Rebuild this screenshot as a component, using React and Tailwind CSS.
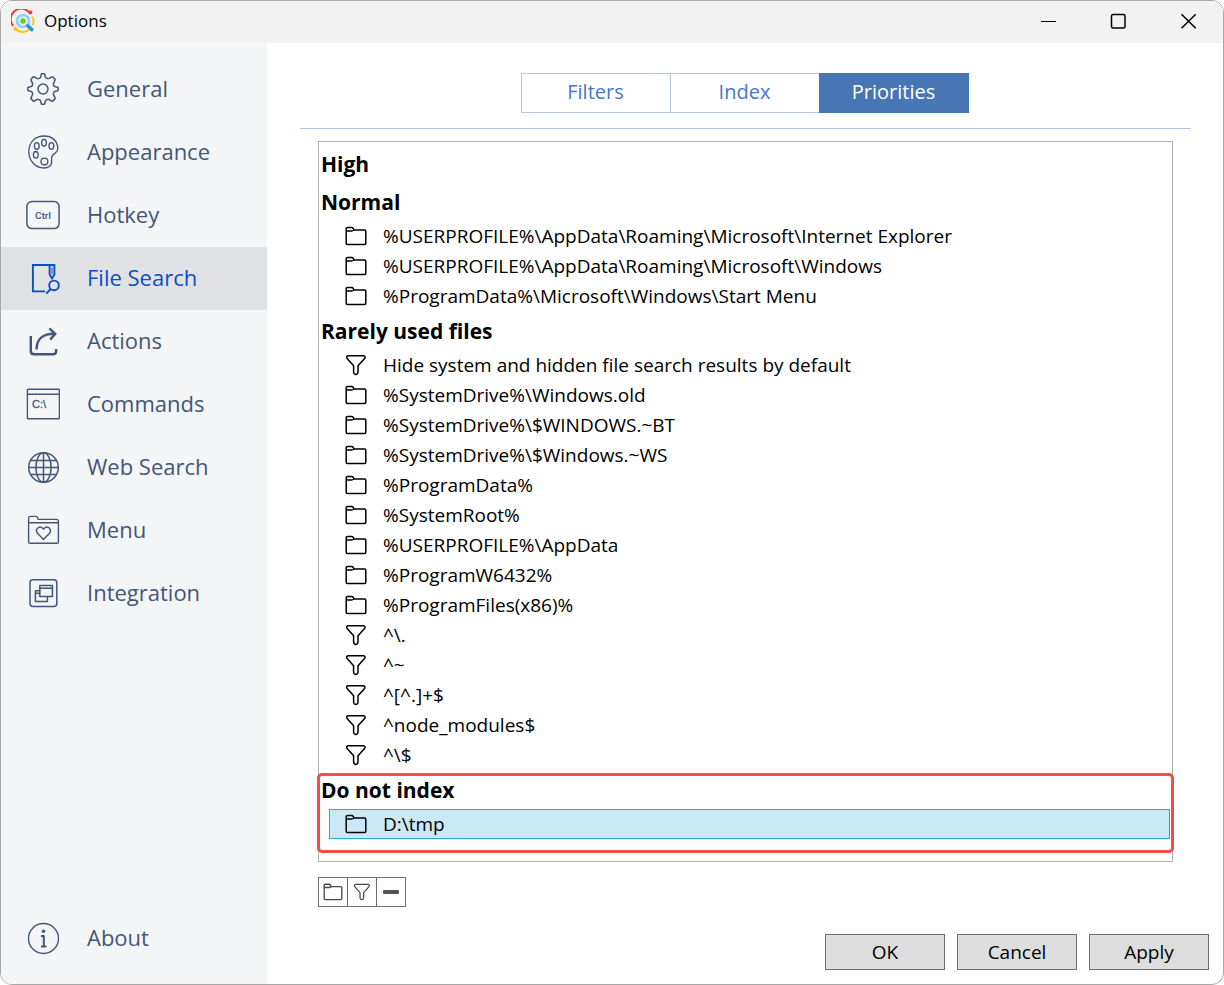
import { useState } from "react";

const NAV_ITEMS = [
  { id: "general", label: "General", Icon: GearIcon },
  { id: "appearance", label: "Appearance", Icon: PaletteIcon },
  { id: "hotkey", label: "Hotkey", Icon: KeyIcon },
  { id: "file-search", label: "File Search", Icon: FileSearchIcon },
  { id: "actions", label: "Actions", Icon: ShareIcon },
  { id: "commands", label: "Commands", Icon: TerminalIcon },
  { id: "web-search", label: "Web Search", Icon: GlobeIcon },
  { id: "menu", label: "Menu", Icon: HeartFolderIcon },
  { id: "integration", label: "Integration", Icon: WindowsIcon },
];

const TABS = ["Filters", "Index", "Priorities"];

const GROUPS = [
  { title: "High", rows: [] },
  {
    title: "Normal",
    rows: [
      { kind: "folder", text: "%USERPROFILE%\\AppData\\Roaming\\Microsoft\\Internet Explorer" },
      { kind: "folder", text: "%USERPROFILE%\\AppData\\Roaming\\Microsoft\\Windows" },
      { kind: "folder", text: "%ProgramData%\\Microsoft\\Windows\\Start Menu" },
    ],
  },
  {
    title: "Rarely used files",
    rows: [
      { kind: "filter", text: "Hide system and hidden file search results by default" },
      { kind: "folder", text: "%SystemDrive%\\Windows.old" },
      { kind: "folder", text: "%SystemDrive%\\$WINDOWS.~BT" },
      { kind: "folder", text: "%SystemDrive%\\$Windows.~WS" },
      { kind: "folder", text: "%ProgramData%" },
      { kind: "folder", text: "%SystemRoot%" },
      { kind: "folder", text: "%USERPROFILE%\\AppData" },
      { kind: "folder", text: "%ProgramW6432%" },
      { kind: "folder", text: "%ProgramFiles(x86)%" },
      { kind: "filter", text: "^\\." },
      { kind: "filter", text: "^~" },
      { kind: "filter", text: "^[^.]+$" },
      { kind: "filter", text: "^node_modules$" },
      { kind: "filter", text: "^\\$" },
    ],
  },
  { title: "Do not index", marked: true, rows: [{ kind: "folder", text: "D:\\tmp" }] },
];

// Sidebar icons share a 34px box and take the text colour.
function NavSvg({ children, width = 1.5 }) {
  return (
    <svg width="34" height="34" viewBox="0 0 34 34" fill="none" stroke="currentColor" strokeWidth={width} strokeLinecap="round" strokeLinejoin="round" aria-hidden="true" className="shrink-0">
      {children}
    </svg>
  );
}

function GearIcon() {
  return (
    <NavSvg>
      <path d="M14.6 5.1 L15.2 2.4 Q15.3 1.8 16 1.8 H18 Q18.7 1.8 18.8 2.4 L19.2 4.6 Q19.6 6.4 21.4 6.6 Q22.6 6.9 23.8 6 L25.8 4.9 Q26.4 4.6 26.9 5.1 L28.9 7.1 Q29.4 7.6 29.1 8.2 L28 10.2 Q27.1 11.4 27.4 12.6 Q27.6 14.4 29.4 14.8 L31.6 15.2 Q32.2 15.3 32.2 16 V18 Q32.2 18.7 31.6 18.8 L29.4 19.2 Q27.6 19.6 27.4 21.4 Q27.1 22.6 28 23.8 L29.1 25.8 Q29.4 26.4 28.9 26.9 L26.9 28.9 Q26.4 29.4 25.8 29.1 L23.8 28 Q22.6 27.1 21.4 27.4 Q19.6 27.6 19.2 29.4 L18.8 31.6 Q18.7 32.2 18 32.2 H16 Q15.3 32.2 15.2 31.6 L14.8 29.4 Q14.4 27.6 12.6 27.4 Q11.4 27.1 10.2 28 L8.2 29.1 Q7.6 29.4 7.1 28.9 L5.1 26.9 Q4.6 26.4 4.9 25.8 L6 23.8 Q6.9 22.6 6.6 21.4 Q6.4 19.6 4.6 19.2 L2.4 18.8 Q1.8 18.7 1.8 18 V16 Q1.8 15.3 2.4 15.2 L4.6 14.8 Q6.4 14.4 6.6 12.6 Q6.9 11.4 6 10.2 L4.9 8.2 Q4.6 7.6 5.1 7.1 L7.1 5.1 Q7.6 4.6 8.2 4.9 L10.2 6 Q11.4 6.9 12.6 6.6 Q14.2 6.4 14.6 5.1 Z" />
      <circle cx="17" cy="17" r="5" />
    </NavSvg>
  );
}

function PaletteIcon() {
  return (
    <NavSvg width={1.3}>
      <path d="M18 1 C9 1 2.8 7.6 2.8 16.5 C2.8 26 9.6 33 17.6 33 C23 33 26.4 30 25.6 25.4 C25 22 26 20.2 28.8 18.4 C31.6 16.5 32.4 13.6 31.4 10.2 C29.6 4.2 24.6 1 18 1 Z" />
      <ellipse cx="18" cy="7.7" rx="2.4" ry="3.3" />
      <ellipse cx="10.8" cy="11" rx="2.4" ry="3.3" />
      <ellipse cx="25.4" cy="11" rx="2.4" ry="3.3" />
      <ellipse cx="9.8" cy="19.8" rx="2.4" ry="3.3" />
      <circle cx="18.4" cy="26.6" r="3.4" />
    </NavSvg>
  );
}

function KeyIcon() {
  return (
    <NavSvg>
      <rect x="0.9" y="3.6" width="32.2" height="27" rx="5" />
      <text x="17" y="20.5" textAnchor="middle" fontSize="9" fontFamily="Inter, sans-serif" fontWeight="600" fill="currentColor" stroke="none">Ctrl</text>
    </NavSvg>
  );
}

function FileSearchIcon() {
  return (
    <NavSvg width={1.9}>
      <path strokeLinecap="butt" strokeLinejoin="miter" d="M19 30.4 H6.9 V4 H28.4 V13.5 L26 17.5 L23.6 13.5 V4" />
      <path d="M26 13 V7" strokeWidth="1" />
      <circle cx="28" cy="24.4" r="4.8" />
      <path strokeLinecap="butt" d="M24.7 28 L20.2 32.6" />
    </NavSvg>
  );
}

function ShareIcon() {
  return (
    <NavSvg width={2.4}>
      <path d="M4.8 12 V27 Q4.8 30.3 8 30.3 H27 Q30.1 30.3 30.1 27.2 V25" strokeLinecap="butt" />
      <path d="M10.6 25.6 C10.6 14.6 16.2 9.8 29 9.8" strokeLinecap="butt" />
      <path d="M23.4 4.3 L29.2 9.8 L24.2 15.6" strokeLinecap="butt" strokeLinejoin="miter" />
    </NavSvg>
  );
}

function TerminalIcon() {
  return (
    <NavSvg width={1.4}>
      <rect x="1.4" y="2.2" width="32" height="29.6" rx="1" />
      <path d="M1.6 7.2 H33.2" />
      <text x="6" y="21" fontSize="11" fontFamily="Liberation Sans, sans-serif" fill="currentColor" stroke="currentColor" strokeWidth="0.3">C:\</text>
    </NavSvg>
  );
}

function GlobeIcon() {
  return (
    <NavSvg width={1.5}>
      <circle cx="17.5" cy="17.5" r="14.8" />
      <ellipse cx="17.5" cy="17.5" rx="7.6" ry="14.8" />
      <path d="M17.5 2.7 V32.3 M2.7 17.5 H32.3 M4.9 10.5 H30.1 M4.9 24.5 H30.1" />
    </NavSvg>
  );
}

function HeartFolderIcon() {
  return (
    <NavSvg width={1.4}>
      <path d="M2.6 28.7 V5.4 Q2.6 3.4 4.6 3.4 H9.6 Q10.8 3.4 11.4 4.5 L12.2 6.4 H30.4 Q32.4 6.4 32.4 8.4 V28.7 Q32.4 30.3 30.8 30.3 H4.2 Q2.6 30.3 2.6 28.7 Z M2.6 9.8 H32.4" />
      <path d="M17.5 26.4 L11.7 20.6 Q9.4 17.8 11.3 15.4 Q14.4 12.4 17.5 16 Q20.6 12.4 23.7 15.4 Q25.6 17.8 23.3 20.6 Z" />
    </NavSvg>
  );
}

function WindowsIcon() {
  return (
    <NavSvg width={1.5}>
      <rect x="4" y="3.8" width="26.8" height="26.8" rx="3" />
      <path d="M13.8 14.8 H9.4 V25.4 H21.4 V20.5 M9.4 17.2 H13.8" />
      <path d="M13.8 9.4 H26.4 V20.4 H13.8 Z M13.8 12.2 H26.4" />
    </NavSvg>
  );
}

function InfoIcon() {
  return (
    <NavSvg width={1.4}>
      <circle cx="17.5" cy="17.5" r="15" />
      <circle cx="17.5" cy="10.2" r="1.8" fill="currentColor" stroke="none" />
      <path d="M15 15 H17.8 V25.2 M15 25.4 H20.4" strokeWidth="2" strokeLinecap="butt" />
    </NavSvg>
  );
}

function FolderIcon({ className = "h-5 w-[22px]" }) {
  return (
    <svg viewBox="0 0 22 20" fill="none" stroke="currentColor" strokeWidth="1.5" strokeLinejoin="round" aria-hidden="true" className={`shrink-0 ${className}`}>
      <path d="M1.2 17.2 V2.8 Q1.2 1.4 2.6 1.4 H6.6 Q7.6 1.4 8.2 2.4 L9 4 H19.6 Q20.8 4 20.8 5.2 V17.2 Q20.8 18.4 19.6 18.4 H2.4 Q1.2 18.4 1.2 17.2 Z" />
      <path d="M1.4 5 H6.8 Q7.6 5 9 4" />
    </svg>
  );
}

function FilterIcon({ className = "size-[22px]" }) {
  return (
    <svg viewBox="0 0 22 22" fill="none" stroke="currentColor" strokeWidth="1.5" strokeLinejoin="round" aria-hidden="true" className={`shrink-0 ${className}`}>
      <path d="M3 1.7 H18.6 Q20.6 2.2 19.8 4.2 L13 11.8 V18 Q12.8 20.4 10.8 20.4 Q8.8 20.4 8.6 18 V11.8 L1.9 4.2 Q1 2.2 3 1.7 Z" />
    </svg>
  );
}

function AppLogo() {
  return (
    <svg width="24" height="24" viewBox="0 0 24 24" fill="none" aria-hidden="true">
      <path d="M2.3 17 A10.4 10.4 0 0 1 18 3.2" stroke="#f5333b" strokeWidth="1.9" />
      <circle cx="19.4" cy="3.6" r="2" fill="#f5333b" />
      <path d="M21.4 7.6 A10.4 10.4 0 0 1 21.6 16.4 M18 20.8 A10.4 10.4 0 0 1 5 20.6" stroke="#fcc31e" strokeWidth="1.9" />
      <circle cx="4.4" cy="19.8" r="2" fill="#fcc31e" />
      <circle cx="12" cy="12" r="6" fill="#e2f4ff" stroke="#8fd0fa" strokeWidth="2.6" />
      <circle cx="12" cy="12" r="2.7" fill="#6fca1c" />
      <path d="M16.8 16.8 L20.8 20.6" stroke="#2b8fe0" strokeWidth="3.6" strokeLinecap="round" />
    </svg>
  );
}

function NavButton({ item, active, onClick }) {
  const { Icon, label } = item;
  return (
    <button
      type="button"
      onClick={onClick}
      className={`flex h-[63px] w-full items-center gap-[27px] pb-0.5 pl-[25px] text-left text-[22px] ${active ? "bg-[#e1e2e6] text-[#0a4fc4]" : "text-[#445577]"}`}
    >
      <Icon />
      {label}
    </button>
  );
}

function PriorityGroup({ group, selected, onSelect }) {
  return (
    <section className="relative">
      <h2 className="flex h-[38px] items-center pt-0.5 pl-0.5 text-[21px] font-bold">{group.title}</h2>
      {group.rows.length > 0 && (
        <ul className="pr-0.5 pb-px pl-[10px]">
          {group.rows.map((row) => (
            <li key={row.text}>
              <button
                type="button"
                onClick={() => onSelect(row.text)}
                className={`flex h-[30px] w-full items-center gap-4 border pl-[15px] text-left text-[19px] whitespace-nowrap ${selected === row.text ? "border-[#2fa3d9] bg-[#cbe8f6]" : "border-transparent"}`}
              >
                {row.kind === "folder" ? <FolderIcon /> : <FilterIcon />}
                {row.text}
              </button>
            </li>
          ))}
        </ul>
      )}
      {group.marked && <div className="pointer-events-none absolute -inset-x-[2px] top-0.5 -bottom-[13px] rounded-[5px] border-3 border-[#f54c45]" />}
    </section>
  );
}

export default function App() {
  const [page, setPage] = useState("file-search");
  const [tab, setTab] = useState("Priorities");
  const [selected, setSelected] = useState("D:\\tmp");

  return (
    <div className="flex min-h-screen flex-col overflow-hidden rounded-xl border border-[#a9a9a9] bg-white font-['Open_Sans','Noto_Sans',sans-serif] text-black">
      <header className="flex h-[42px] shrink-0 items-center bg-[#f2f2f2] pb-[3px] pl-[10px]">
        <AppLogo />
        <h1 className="ml-[9px] flex-1 text-[17px]">Options</h1>
        <button type="button" aria-label="Minimize" className="flex h-full w-[70px] items-center justify-center">
          <svg width="16" height="16" viewBox="0 0 16 16" stroke="#000" aria-hidden="true"><path d="M1 8.5 H16" /></svg>
        </button>
        <button type="button" aria-label="Maximize" className="flex h-full w-[70px] items-center justify-center">
          <svg width="16" height="16" viewBox="0 0 16 16" fill="none" stroke="#000" strokeWidth="1.5" aria-hidden="true"><rect x="1.5" y="1.5" width="13.5" height="13.5" rx="1.5" /></svg>
        </button>
        <button type="button" aria-label="Close" className="flex h-full w-[70px] items-center justify-center">
          <svg width="16" height="16" viewBox="0 0 16 16" stroke="#000" strokeWidth="1.5" aria-hidden="true"><path d="M1.5 1.3 L15.7 15.3 M15.7 1.3 L1.5 15.3" /></svg>
        </button>
      </header>

      <div className="flex flex-1">
        <nav className="flex w-[266px] shrink-0 flex-col bg-[#f4f5f7] pt-[15px] pb-[14px]">
          {NAV_ITEMS.map((item) => (
            <NavButton key={item.id} item={item} active={page === item.id} onClick={() => setPage(item.id)} />
          ))}
          <div className="mt-auto">
            <NavButton item={{ label: "About", Icon: InfoIcon }} active={page === "about"} onClick={() => setPage("about")} />
          </div>
        </nav>

        <main className="flex min-w-0 flex-1 flex-col pt-[30px] pb-[14px]">
          <div className="mr-8 ml-[33px] flex justify-center border-b border-[#aec4e6] pr-0.5 pb-[15px]">
            {TABS.map((name) => (
              <button
                key={name}
                type="button"
                onClick={() => setTab(name)}
                className={`-ml-px h-10 w-[150px] border pb-0.5 text-[20px] first:ml-0 ${tab === name ? "border-[#4876b5] bg-[#4876b5] text-white" : "border-[#b5c7e0] text-[#4775cc]"}`}
              >
                {name}
              </button>
            ))}
          </div>

          <div className="mt-3 mr-[50px] ml-[51px] min-h-[721px] border border-[#adadb3] pt-[3px]">
            {GROUPS.map((group) => (
              <PriorityGroup key={group.title} group={group} selected={selected} onSelect={setSelected} />
            ))}
          </div>

          <div className="mt-[15px] ml-[51px] flex text-[#4a4a4a]">
            <button type="button" aria-label="Add folder" className="-mr-px flex size-[30px] items-center justify-center border border-[#707070]"><FolderIcon className="h-[18px] w-5" /></button>
            <button type="button" aria-label="Add filter" className="-mr-px flex size-[30px] items-center justify-center border border-[#707070]"><FilterIcon className="size-[18px]" /></button>
            <button type="button" aria-label="Remove" className="flex size-[30px] items-center justify-center border border-[#707070]">
              <svg width="16" height="4" viewBox="0 0 16 4" aria-hidden="true"><rect width="16" height="4" rx="1" fill="#555" /></svg>
            </button>
          </div>

          <div className="mt-auto flex justify-end gap-3 pr-[14px]">
            {["OK", "Cancel", "Apply"].map((name) => (
              <button key={name} type="button" className="h-9 w-[120px] border border-[#707070] bg-[#dddddd] text-[19px]">{name}</button>
            ))}
          </div>
        </main>
      </div>
    </div>
  );
}
